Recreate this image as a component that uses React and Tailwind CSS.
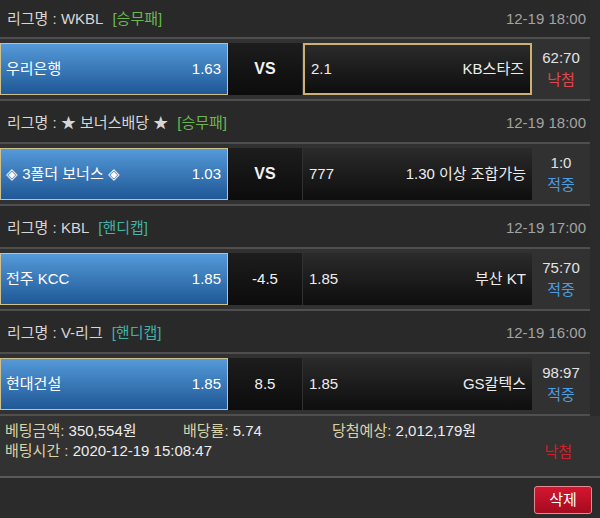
const FONT = { fontFamily: '"Liberation Sans", "Noto Sans CJK KR", sans-serif' }

const games = [
  { league: 'WKBL', type: '[승무패]', typeColor: 'text-[#69b84f]', time: '12-19 18:00', home: '우리은행', homeOdds: '1.63', mid: 'VS', midBold: true, awayOdds: '2.1', away: 'KB스타즈', awayPicked: true, score: '62:70', result: '낙첨' },
  { league: '★ 보너스배당 ★', type: '[승무패]', typeColor: 'text-[#69b84f]', time: '12-19 18:00', home: '◈ 3폴더 보너스 ◈', homeOdds: '1.03', mid: 'VS', midBold: true, awayOdds: '777', away: '1.30 이상 조합가능', score: '1:0', result: '적중' },
  { league: 'KBL', type: '[핸디캡]', typeColor: 'text-[#3fb3a6]', time: '12-19 17:00', home: '전주 KCC', homeOdds: '1.85', mid: '-4.5', awayOdds: '1.85', away: '부산 KT', score: '75:70', result: '적중' },
  { league: 'V-리그', type: '[핸디캡]', typeColor: 'text-[#3fb3a6]', time: '12-19 16:00', home: '현대건설', homeOdds: '1.85', mid: '8.5', awayOdds: '1.85', away: 'GS칼텍스', score: '98:97', result: '적중' },
]

function GameBlock({ g, first }) {
  return (
    <div>
      {/* league header */}
      <div className={`${first ? 'h-[39px] pt-[1px]' : 'h-[43px] pt-[4px]'} flex items-center justify-between pl-[7px] pr-[4px] bg-[#292929] border-b-2 border-[#4f4f4f] text-[15px]`}>
        <div className="flex items-center gap-[9px]">
          <span className="text-[#d6d6d6]">리그명 : {g.league}</span>
          <span className={g.typeColor}>{g.type}</span>
        </div>
        <span className="text-[#a3a3a3]">{g.time}</span>
      </div>

      {/* match row */}
      <div className="h-[62px] flex items-center bg-[#313131] border-b-2 border-[#4f4f4f] text-[15px]">
        <div className="w-[228px] h-[52px] flex items-center justify-between pl-[5px] pr-[6px] border border-[#cfc08c] bg-gradient-to-b from-[#559ad9] to-[#1f5896] text-white">
          <span>{g.home}</span>
          <span>{g.homeOdds}</span>
        </div>
        <div className={`w-[74px] h-[52px] flex items-center justify-center bg-gradient-to-b from-[#1d1d1d] to-[#0c0c0c] text-[#f2f2f2] ${g.midBold ? 'font-bold text-[16px]' : ''}`}>
          {g.mid}
        </div>
        <div className={`ml-[1px] w-[229px] h-[52px] flex items-center justify-between pl-[6px] pr-[6px] bg-gradient-to-b from-[#2b2b2b] to-[#0e0e0e] text-[#ededed] ${g.awayPicked ? 'border-2 border-[#cdb172]' : ''}`}>
          <span>{g.awayOdds}</span>
          <span>{g.away}</span>
        </div>
        <div className="flex-1 h-full flex flex-col items-center justify-center leading-[22px]">
          <span className="text-[#e3e3e3]">{g.score}</span>
          <span className={g.result === '낙첨' ? 'text-[#e0474e]' : 'text-[#4c9de0]'}>{g.result}</span>
        </div>
      </div>
    </div>
  )
}

export default function App() {
  return (
    <div className="w-[600px] h-[518px] bg-[#2b2b2b] overflow-hidden" style={FONT}>
      <div className="w-[590px]">
        {games.map((g, i) => <GameBlock key={i} g={g} first={i === 0} />)}
      </div>

      {/* summary */}
      <div className="h-[62px] bg-[#323232] border-b-2 border-[#5a5a5a] pt-[5px] pl-[5px] pr-[28px] text-[15px] leading-[20px]">
        <div className="flex">
          <span className="w-[178px]"><span className="text-[#d9d2a6]">베팅금액:</span> <span className="text-[#ececec]">350,554원</span></span>
          <span className="w-[149px]"><span className="text-[#d9d2a6]">배당률:</span> <span className="text-[#ececec]">5.74</span></span>
          <span><span className="text-[#d9d2a6]">당첨예상:</span> <span className="text-[#ececec]">2,012,179원</span></span>
        </div>
        <div className="flex justify-between">
          <span><span className="text-[#d9d2a6]">배팅시간 :</span> <span className="text-[#ececec]">2020-12-19 15:08:47</span></span>
          <span className="text-[#d21f2c] mt-[1px]">낙첨</span>
        </div>
      </div>

      {/* actions */}
      <div className="flex justify-end pt-[8px] pr-[8px]">
        <button className="w-[58px] h-[28px] rounded-[3px] border border-[#e48a92] bg-gradient-to-b from-[#d4162f] to-[#a50b1f] text-white text-[15px]">
          삭제
        </button>
      </div>
    </div>
  )
}
